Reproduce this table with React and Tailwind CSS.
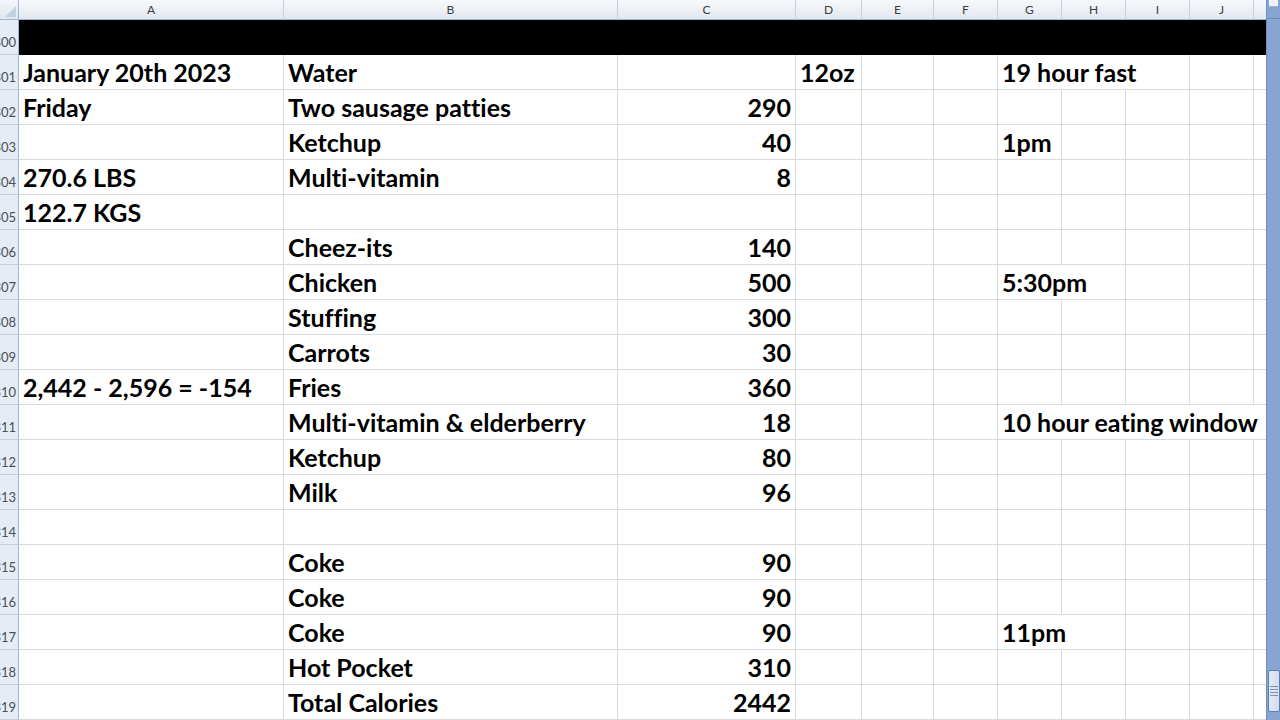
import React from "react";

const FONT = { fontFamily: "Lato, 'Open Sans', Arial, sans-serif" };

const COLS = ["A", "B", "C", "D", "E", "F", "G", "H", "I", "J", ""];

// row data: map col index (1=A .. 11=K) -> {t, r (right aligned), span}
const rows = [
  { n: 301, c: { 1: { t: "January 20th 2023" }, 2: { t: "Water" }, 4: { t: "12oz" }, 7: { t: "19 hour fast", span: 3 } } },
  { n: 302, c: { 1: { t: "Friday" }, 2: { t: "Two sausage patties" }, 3: { t: "290", r: true } } },
  { n: 303, c: { 2: { t: "Ketchup" }, 3: { t: "40", r: true }, 7: { t: "1pm" } } },
  { n: 304, c: { 1: { t: "270.6 LBS" }, 2: { t: "Multi-vitamin" }, 3: { t: "8", r: true } } },
  { n: 305, c: { 1: { t: "122.7 KGS" } } },
  { n: 306, c: { 2: { t: "Cheez-its" }, 3: { t: "140", r: true } } },
  { n: 307, c: { 2: { t: "Chicken" }, 3: { t: "500", r: true }, 7: { t: "5:30pm", span: 2 } } },
  { n: 308, c: { 2: { t: "Stuffing" }, 3: { t: "300", r: true } } },
  { n: 309, c: { 2: { t: "Carrots" }, 3: { t: "30", r: true } } },
  { n: 310, c: { 1: { t: "2,442 - 2,596 = -154" }, 2: { t: "Fries" }, 3: { t: "360", r: true } } },
  { n: 311, c: { 2: { t: "Multi-vitamin & elderberry" }, 3: { t: "18", r: true }, 7: { t: "10 hour eating window", span: 5 } } },
  { n: 312, c: { 2: { t: "Ketchup" }, 3: { t: "80", r: true } } },
  { n: 313, c: { 2: { t: "Milk" }, 3: { t: "96", r: true } } },
  { n: 314, c: {} },
  { n: 315, c: { 2: { t: "Coke" }, 3: { t: "90", r: true } } },
  { n: 316, c: { 2: { t: "Coke" }, 3: { t: "90", r: true } } },
  { n: 317, c: { 2: { t: "Coke" }, 3: { t: "90", r: true }, 7: { t: "11pm", span: 2 } } },
  { n: 318, c: { 2: { t: "Hot Pocket" }, 3: { t: "310", r: true } } },
  { n: 319, c: { 2: { t: "Total Calories" }, 3: { t: "2442", r: true } } },
];

const GRID = "grid grid-cols-[19px_265px_334px_178px_66px_72px_64px_64px_64px_64px_64px_12px]";

const spanClass = { 1: "col-span-1", 2: "col-span-2", 3: "col-span-3", 4: "col-span-4", 5: "col-span-5" };

function RowNum({ n }) {
  return (
    <div className="h-[35px] bg-[#e6ecf5] border-b border-r border-b-[#c3cedd] border-r-[#9eb6ce] flex items-end justify-end overflow-hidden pr-[2px] pb-[5px]">
      <span className="text-[13px] leading-none text-[#4a4f57] whitespace-nowrap">{n}</span>
    </div>
  );
}

function Row({ row }) {
  const cells = [];
  let i = 1;
  while (i <= 11) {
    const d = row.c[i];
    const span = d && d.span ? d.span : 1;
    const last = i + span - 1 >= 11;
    cells.push(
      <div
        key={i}
        className={`h-[35px] border-b border-[#d6d9de] ${last ? "" : "border-r"} ${spanClass[span]} flex items-end overflow-hidden whitespace-nowrap ${d && d.r ? "justify-end pr-[4px]" : "pl-[4px]"}`}
      >
        {d ? (
          <span className="text-[25px] font-bold leading-none pb-[4px] text-black [font-variant-ligatures:none]">
            {d.t}
          </span>
        ) : null}
      </div>
    );
    i += span;
  }
  return (
    <div className={GRID}>
      <RowNum n={row.n} />
      {cells}
    </div>
  );
}

export default function App() {
  return (
    <div className="flex w-[1280px] h-[720px] overflow-hidden bg-white" style={FONT}>
      <div className="w-[1266px] flex flex-col">
        {/* column header */}
        <div className={GRID}>
          <div className="h-[20px] bg-gradient-to-b from-[#f3f6fa] to-[#dfe6ef] border-b border-r border-[#9eb6ce] flex items-end justify-end p-[2px]">
            <div className="w-0 h-0 border-l-[11px] border-l-transparent border-b-[11px] border-b-[#c4d0e0]" />
          </div>
          {COLS.map((c, idx) => (
            <div
              key={idx}
              className={`h-[20px] bg-gradient-to-b from-[#f7f9fc] to-[#e3e8ef] border-b border-b-[#9eb6ce] ${idx < 10 ? "border-r border-r-[#c6d1de]" : ""} flex items-center justify-center text-[12px] text-[#3d3d3d] leading-none`}
            >
              {c}
            </div>
          ))}
        </div>
        {/* black row 300 */}
        <div className={GRID}>
          <RowNum n={300} />
          <div className="col-span-11 h-[35px] bg-black" />
        </div>
        {rows.map((r) => (
          <Row key={r.n} row={r} />
        ))}
      </div>
      {/* vertical scrollbar */}
      <div className="w-[14px] h-[720px] flex flex-col bg-[#88a4d0] border-l border-l-[#6f8dbe]">
        <div className="h-[7px] mx-[2px] bg-[#eef2f8] border-b border-[#9fb3d3]" />
        <div className="h-[12px] border-b border-[#6a88ba]" />
        <div className="flex-1" />
        <div className="h-[42px] ml-[1px] bg-gradient-to-r from-[#e4eaf4] to-[#d2dcec] border border-[#5e7fb4] rounded-[2px] flex flex-col items-center justify-center gap-[2px]">
          <div className="w-[8px] h-px bg-[#7d92b3]" />
          <div className="w-[8px] h-px bg-[#7d92b3]" />
          <div className="w-[8px] h-px bg-[#7d92b3]" />
          <div className="w-[8px] h-px bg-[#7d92b3]" />
        </div>
        <div className="h-[8px]" />
      </div>
    </div>
  );
}
